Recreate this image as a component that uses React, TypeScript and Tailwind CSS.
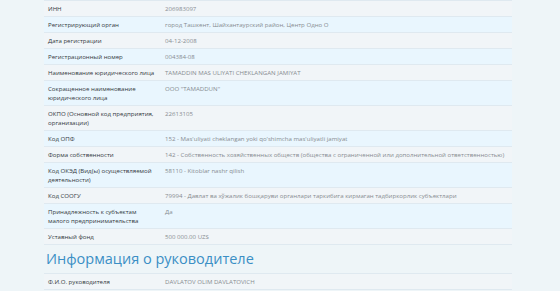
import React from "react"

interface Row {
    label: string
    value: string
}

// labels carry their own line breaks, as in the source page
const rows: Row[] = [
    { label: "ИНН", value: "206983097" },
    { label: "Регистрирующий орган", value: "город Ташкент, Шайхантаурский район, Центр Одно О" },
    { label: "Дата регистрации", value: "04-12-2008" },
    { label: "Регистрационный номер", value: "004384-08" },
    { label: "Наименование юридического лица", value: "TAMADDIN MAS ULIYATI CHEKLANGAN JAMIYAT" },
    { label: "Сокращенное наименование\nюридического лица", value: "ООО \"TAMADDUN\"" },
    { label: "ОКПО (Основной код предприятия,\nорганизации)", value: "22613105" },
    { label: "Код ОПФ", value: "152 - Mas'uliyati cheklangan yoki qo'shimcha mas'uliyatli jamiyat" },
    {
        label: "Форма собственности",
        value: "142 - Собственность хозяйственных обществ (общества с ограниченной или дополнительной ответственностью)",
    },
    { label: "Код ОКЭД (Вид(ы) осуществляемой\nдеятельности)", value: "58110 - Kitoblar nashr qilish" },
    {
        label: "Код СООГУ",
        value: "79994 - Давлат ва хўжалик бошқаруви органлари таркибига кирмаган тадбиркорлик субъектлари",
    },
    { label: "Принадлежность к субъектам\nмалого предпринимательства", value: "Да" },
    { label: "Уставный фонд", value: "500 000.00 UZS" },
]

function InfoRow({ row, striped }: { row: Row; striped: boolean }) {
    return (
        <div
            className={`grid grid-cols-[119px_1fr] border-b border-[#dfe9f0] ${
                striped ? "bg-[#e9f6fe]" : "bg-[#f1f5f8]"
            }`}
        >
            <div className="whitespace-pre-line pl-[4px] pr-[1px] py-[3px] leading-[9px] text-[#33383d]">
                {row.label}
            </div>
            <div className="pl-[2px] pr-[2px] py-[3px] leading-[9px] text-[#878c91]">{row.value}</div>
        </div>
    )
}

export default function App() {
    return (
        <div
            className="min-h-[291px] w-[560px] bg-[#eef5f8] pl-[44px]"
            style={{ fontFamily: "'Open Sans', 'Noto Sans', sans-serif" }}
        >
            <div className="w-[468px] text-[6.1px]">
                <div className="border-t border-[#dfe9f0]">
                    {rows.map((row, i) => (
                        <InfoRow key={row.label} row={row} striped={i % 2 === 1} />
                    ))}
                </div>
                <h2 className="py-[6px] pl-[2px] text-[14.5px] leading-[16px] text-[#3b8fc5]">
                    Информация о руководителе
                </h2>
                <div className="border-t border-[#dfe9f0]">
                    <InfoRow row={{ label: "Ф.И.О. руководителя", value: "DAVLATOV OLIM DAVLATOVICH" }} striped={false} />
                </div>
            </div>
        </div>
    )
}
